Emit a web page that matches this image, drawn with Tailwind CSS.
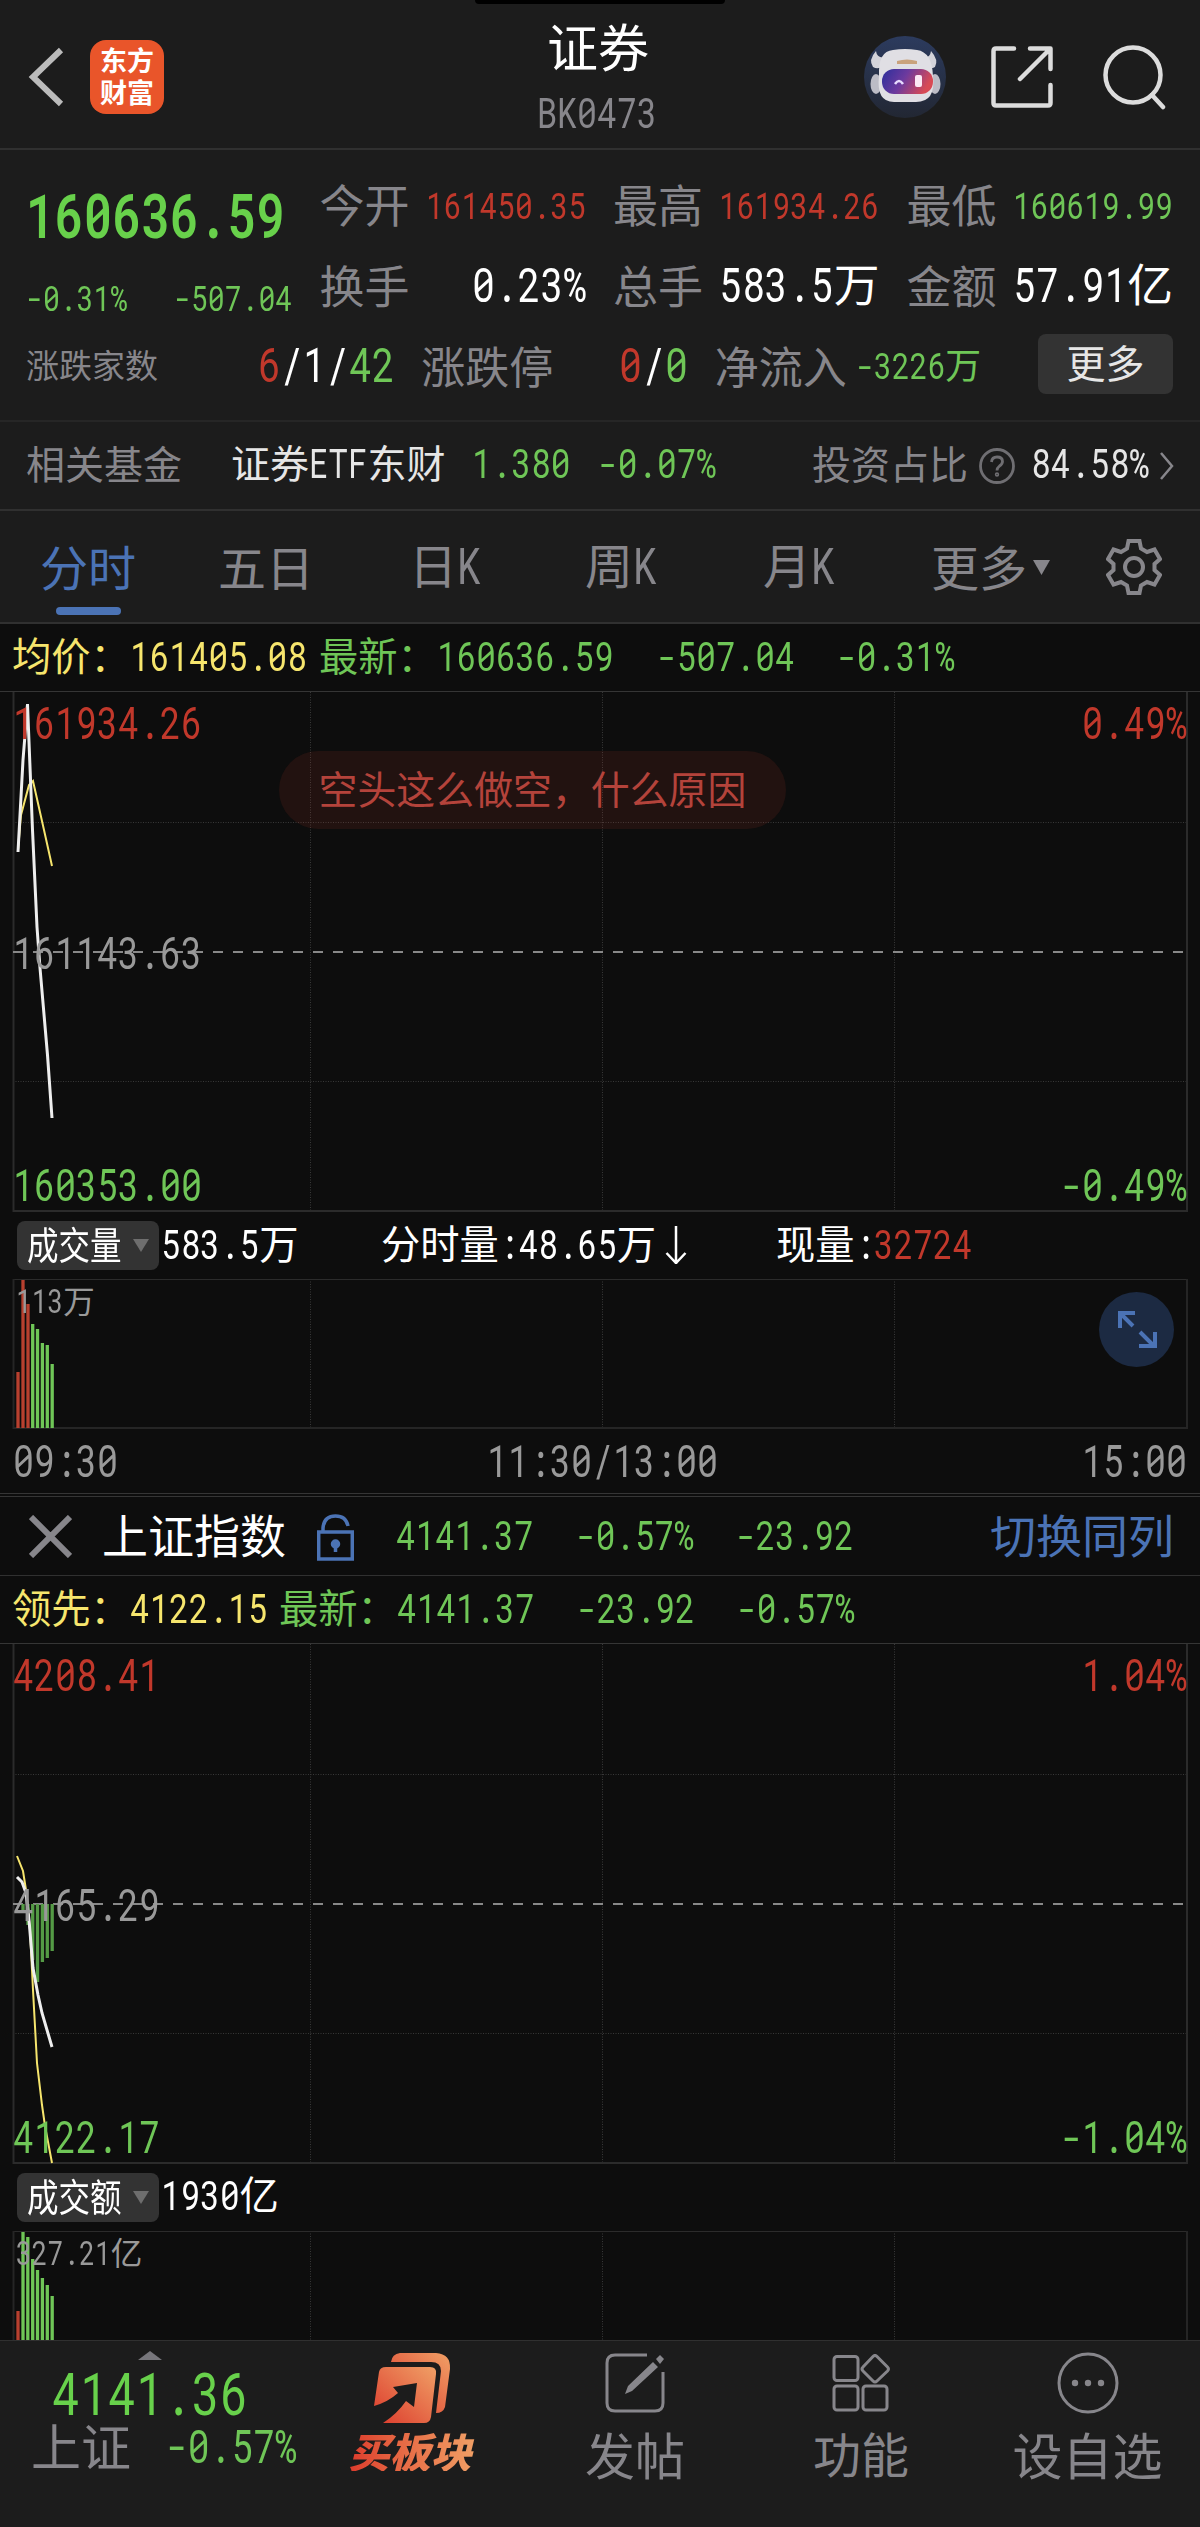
<!DOCTYPE html>
<html lang="zh-CN">

<head>
    <meta charset="UTF-8">
    <meta name="viewport" content="width=device-width, initial-scale=1.0">
    <title>证券 BK0473</title>
    <script src="https://cdn.jsdelivr.net/npm/@tailwindcss/browser@4"></script>
</head>

<body class="w-[1200px] h-[2527px] overflow-hidden bg-[#0d0d0d] text-white leading-none whitespace-nowrap font-['Noto_Sans_CJK_SC',sans-serif]">

    <!-- header -->
    <header class="relative h-[150px] bg-[#1c1c1c] border-b-2 border-[#303030] flex items-center justify-between pl-[28px] pr-[31px]">
        <div class="absolute top-0 left-[475px] w-[250px] h-[4px] bg-black rounded-b-[4px]"></div>
        <div class="flex items-center gap-[26px] mt-[5px]">
            <svg width="36" height="60" viewBox="0 0 36 60" fill="none" stroke="#bbbbbb" stroke-width="6"><path d="M33 3 L5 30 L33 57" /></svg>
            <div class="w-[74px] h-[74px] rounded-[16px] bg-[#e9552a] flex flex-col items-center justify-center gap-[5px] pb-[3px] text-[27px] font-bold">
                <span>东方</span>
                <span>财富</span>
            </div>
        </div>
        <div class="absolute left-[398px] w-[400px] top-[20px] flex flex-col items-center gap-[20px]">
            <h1 class="text-[51px]">证券</h1>
            <div class="text-[40px] text-[#87868b] -ml-[2px]"><i data-n>BK0473</i></div>
        </div>
        <div class="flex items-center gap-[45px] mt-[5px] mr-px">
            <svg width="82" height="82" viewBox="0 0 82 82">
                <defs>
                    <linearGradient id="sky" x1="0" y1="0" x2="0" y2="1"><stop offset="0" stop-color="#2c3b5e" /><stop offset="1" stop-color="#222733" /></linearGradient>
                    <linearGradient id="visor" x1="0" y1="0" x2="1" y2="0.3"><stop offset="0" stop-color="#2b2f9c" /><stop offset="0.5" stop-color="#6d3a9e" /><stop offset="1" stop-color="#d84a55" /></linearGradient>
                </defs>
                <circle cx="41" cy="41" r="41" fill="url(#sky)" />
                <path d="M12 15 Q4 24 9 31 Q14 34 19 30 L22 21 Q13 23 12 15 Z M67 15 Q75 24 71 31 Q66 34 61 30 L58 21 Q66 23 67 15 Z" fill="#d3d3da" />
                <ellipse cx="12" cy="48" rx="5.500" ry="10" fill="#bcbcc6" />
                <ellipse cx="71" cy="48" rx="5.500" ry="10" fill="#bcbcc6" />
                <path d="M15 40 Q14 15 29 14 Q41 12 53 14 Q68 16 69 40 Q72 66 52 66 H30 Q12 66 15 40 Z" fill="#e0dfe4" />
                <path d="M33 25 Q43 22 53 25 V28 H33 Z" fill="#c9a27c" />
                <rect x="18" y="33" width="51" height="25" rx="12" fill="url(#visor)" />
                <path d="M31 48 Q35 42 39 48" fill="none" stroke="#e8dcff" stroke-width="2.500" />
                <rect x="51" y="39" width="7" height="12" rx="2" fill="#fbe9f4" />
            </svg>
            <svg width="62" height="62" viewBox="0 0 62 62" fill="none" stroke="#dcdcdc" stroke-width="4.500" stroke-linecap="round" stroke-linejoin="round">
                <path d="M23 2.500 H5 Q2.500 2.500 2.500 5 V57 Q2.500 59.500 5 59.500 H57 Q59.500 59.500 59.500 57 V39" />
                <path d="M39 2.500 H59.500 V23 M59 3 L29 33" />
            </svg>
            <svg class="ml-[4px]" width="66" height="66" viewBox="0 0 66 66" fill="none" stroke="#dcdcdc" stroke-width="4.500" stroke-linecap="round">
                <circle cx="31" cy="31" r="27.500" />
                <path d="M50 51 L61 63" />
            </svg>
        </div>
    </header>

    <!-- quote summary -->
    <section class="h-[270px] bg-[#1c1c1c] pt-[11px] pl-[26px] pr-[27px] text-[45px] text-[#87868b]">
        <div class="grid grid-cols-4 gap-x-[27px] h-[82px] items-center">
            <div class="text-[57.600px] text-[#68d14b] pt-[24px] font-semibold"><i data-n>160636.59</i></div>
            <div class="flex justify-between items-center"><span>今开</span><span class="text-[35.600px] text-[#c1382b] pt-[3px]"><i data-n>161450.35</i></span></div>
            <div class="flex justify-between items-center"><span>最高</span><span class="text-[35.600px] text-[#c1382b] pt-[3px]"><i data-n>161934.26</i></span></div>
            <div class="flex justify-between items-center"><span>最低</span><span class="text-[35.600px] text-[#6fc657] pt-[3px]"><i data-n>160619.99</i></span></div>
        </div>
        <div class="grid grid-cols-4 gap-x-[27px] h-[82px] items-center">
            <div class="flex justify-between text-[33.800px] text-[#6fc657] pt-[27px]"><i data-n>-0.31%</i><i data-n>-507.04</i></div>
            <div class="flex justify-between items-center"><span>换手</span><span class="text-white text-[45.800px]"><i data-n>0.23%</i></span></div>
            <div class="flex justify-between items-center"><span>总手</span><span class="text-white text-[45.800px]"><i data-n>583.5</i>万</span></div>
            <div class="flex justify-between items-center"><span>金额</span><span class="text-white text-[45.800px]"><i data-n>57.91</i>亿</span></div>
        </div>
        <div class="flex h-[78px] items-center text-[44px]">
            <span class="text-[33px] w-[232px]">涨跌家数</span>
            <span class="w-[164px] text-[45.800px] text-white pt-px"><i data-n class="text-[#c1382b]">6</i><i data-n>/1/</i><i data-n class="text-[#6fc657]">42</i></span>
            <span class="w-[198px] pt-px">涨跌停</span>
            <span class="w-[96px] text-[45.800px] text-white pt-px"><i data-n class="text-[#c1382b]">0</i><i data-n>/</i><i data-n class="text-[#6fc657]">0</i></span>
            <span class="w-[141px] pt-px">净流入</span>
            <span class="w-[183px] text-[35.900px] text-[#6fc657] pt-[2px]"><i data-n>-3226</i>万</span>
            <span class="w-[135px] h-[60px] rounded-[8px] bg-[#333333] text-[#e6e6e6] text-[39px] flex items-center justify-center pb-[5px]">更多</span>
        </div>
    </section>

    <!-- related fund -->
    <section class="h-[91px] bg-[#1c1c1c] border-t-2 border-b-2 border-t-[#262626] border-b-[#303030] flex items-center pl-[26px] pb-[7px] text-[39px] text-[#87868b]">
        <span class="w-[205px]">相关基金</span>
        <span class="w-[241px] text-[#e6e6e6]">证券<i data-n>ETF</i>东财</span>
        <span class="w-[126px] text-[39.400px] text-[#6fc657]"><i data-n>1.380</i></span>
        <span class="w-[214px] text-[39.400px] text-[#6fc657]"><i data-n>-0.07%</i></span>
        <span class="w-[167px]">投资占比</span>
        <svg class="mt-[8px]" width="36" height="36" viewBox="0 0 36 36" fill="none" stroke="#6f6e72" stroke-width="2.800">
            <circle cx="18" cy="18" r="16.500" />
            <path d="M12.500 14 Q13 9 18 9 Q23.500 9 23.500 13.500 Q23.500 16 20.500 18 Q18 20 18 22.500" />
            <circle cx="18" cy="26.500" r="0.800" />
        </svg>
        <span class="ml-[16px] text-[#e6e6e6] text-[39.400px]"><i data-n>84.58%</i></span>
        <svg class="ml-[11px] mt-[8px]" width="14" height="30" viewBox="0 0 14 30" fill="none" stroke="#87868b" stroke-width="2.500"><path d="M1 2 L12 15 L1 28" /></svg>
    </section>

    <!-- period tabs -->
    <nav class="relative h-[113px] bg-[#1c1c1c] border-b-2 border-[#303030] flex items-center pl-[40px] pb-[4px] text-[48px] text-[#87868b]">
        <span class="w-[178px] text-[#4b73b5]">分时</span>
        <span class="w-[191px]">五日</span>
        <span class="w-[176px]">日<i data-n>K</i></span>
        <span class="w-[178px]">周<i data-n>K</i></span>
        <span class="w-[168px]">月<i data-n>K</i></span>
        <span>更多</span>
        <svg class="ml-[6px] mt-[6px]" width="17" height="15"><path d="M0 0 H17 L8.500 15 Z" fill="#87868b" /></svg>
        <svg class="ml-[56px] mt-[4px]" width="56" height="56" viewBox="0 0 56 56" fill="none" stroke="#87868b" stroke-width="4">
            <path d="M22.500 2 H33.500 L35 9.500 L41 13 L48.500 10.500 L54 20 L48.500 25 V31 L54 36 L48.500 45.500 L41 43 L35 46.500 L33.500 54 H22.500 L21 46.500 L15 43 L7.500 45.500 L2 36 L7.500 31 V25 L2 20 L7.500 10.500 L15 13 L21 9.500 Z" />
            <circle cx="28" cy="28" r="9" />
        </svg>
        <div class="absolute left-[56px] top-[96px] w-[65px] h-[8px] rounded-full bg-[#4b73b5]"></div>
    </nav>

    <!-- first chart -->
    <div class="h-[68px] border-b border-[#353535] flex items-center pl-[12px] pb-[5px] text-[39.300px] text-[#6fc657]">
        <span class="w-[307px] text-[#f6e56d]">均价：<i data-n>161405.08</i></span>
        <span class="w-[338px]">最新：<i data-n>160636.59</i></span>
        <span class="w-[180px]"><i data-n>-507.04</i></span>
        <span><i data-n>-0.31%</i></span>
    </div>
    <div class="relative h-[520px]">
        <svg class="block" width="1200" height="520" viewBox="0 692 1200 520" fill="none">
            <path d="M310.500 692 V1210 M602.500 692 V1210 M894.500 692 V1210 M13 822.500 H1187 M13 1081.500 H1187" stroke="#383838" stroke-dasharray="1 1.500" />
            <path d="M13.500 692 V1211 H1187 V692" stroke="#2b2b2b" stroke-width="2" />
            <path d="M13 952 H1187" stroke="#888888" stroke-width="2" stroke-dasharray="10 10" />
            <path d="M18 850 L21 815 L29 785 L33 781 L44 830 L52 866" stroke="#f6e56d" stroke-width="2" />
            <path d="M18 852 L23 760 L27.500 704 L32.500 830 L37 927 L40 968 L47.500 1055 L52 1118" stroke="#eeeeee" stroke-width="3" />
        </svg>
        <div class="absolute inset-0 pl-[13px] pr-[13px] text-[42px]">
            <div class="flex justify-between text-[#c1382b] h-[231px] pt-[8px]"><i data-n>161934.26</i><i data-n>0.49%</i></div>
            <div class="text-[#999999] h-[231px] pt-[7px]"><i data-n>161143.63</i></div>
            <div class="flex justify-between text-[#6fc657] pt-[8px]"><i data-n>160353.00</i><i data-n>-0.49%</i></div>
        </div>
        <div class="absolute left-[279px] top-[59px] w-[507px] h-[78px] rounded-full bg-[#c1382b]/12 text-[#b4433b] text-[38.900px] flex items-center justify-center pb-[6px]">空头这么做空，什么原因</div>
    </div>
    <div class="h-[67px] flex items-center pl-[17px] text-[39.300px]">
        <span class="w-[144px]">
            <span class="w-[142px] h-[49px] rounded-[8px] bg-[#333333] flex items-center pl-[10px] pb-[6px] text-[38px]">
                <span class="w-[106px] origin-left scale-x-[.83]">成交量</span>
                <svg class="mt-[6px]" width="16" height="14"><path d="M0 0 H16 L8 13 Z" fill="#6e6e6e" /></svg>
            </span>
        </span>
        <span class="w-[220px] pb-[4px]"><i data-n>583.5</i>万</span>
        <span class="w-[395px] pb-[4px]">分时量<i data-n>:48.65</i>万<svg class="inline align-[-5px]" width="39" height="40" viewBox="0 0 39 40" fill="none" stroke="#ffffff" stroke-width="2.500"><path d="M20 2 V40 M10.500 29 L20 39 L29.500 29" /></svg></span>
        <span class="pb-[4px]">现量<i data-n>:</i><i data-n class="text-[#c1382b]">32724</i></span>
    </div>
    <div class="relative h-[150px]">
        <svg class="block" width="1200" height="150" viewBox="0 1279 1200 150" fill="none">
            <path d="M310.500 1279 V1428 M602.500 1279 V1428 M894.500 1279 V1428" stroke="#383838" stroke-dasharray="1 1.500" />
            <path d="M13 1279.500 H1187" stroke="#2b2b2b" />
            <path d="M13.500 1279 V1428 H1187 V1279" stroke="#252525" stroke-width="2" />
            <path d="M18 1428 V1372 M23 1428 V1280 M28 1428 V1304" stroke="#b8402f" stroke-width="3.300" />
            <path d="M32.700 1428 V1324 M37.500 1428 V1329 M42.400 1428 V1343 M47.300 1428 V1345 M52.200 1428 V1364" stroke="#6fc657" stroke-width="3.300" />
        </svg>
        <div class="absolute left-[16px] top-[5px] text-[31.500px] text-[#999999]"><i data-n>113</i>万</div>
        <svg class="absolute left-[1099px] top-[13px]" width="75" height="75" viewBox="0 0 75 75" fill="none" stroke="#4b73b5" stroke-width="4">
            <circle cx="37.500" cy="37.500" r="37.500" fill="#1c2a42" stroke="none" />
            <path d="M21 36 V21 H36 M22 22 L34 34 M56 40 V54 H40 M54 53 L41 40" />
        </svg>
    </div>
    <div class="h-[68px] grid grid-cols-3 items-center pl-[13px] pr-[13px] pb-[2px] text-[42px] text-[#999999] border-b-4 border-double border-[#353535]">
        <span><i data-n>09:30</i></span>
        <span class="text-center pl-[4px]"><i data-n>11:30/13:00</i></span>
        <span class="text-right"><i data-n>15:00</i></span>
    </div>

    <!-- second chart -->
    <div class="h-[79px] border-b border-[#303030] flex items-center pl-[29px] text-[39.300px] text-[#6fc657]">
        <svg class="mr-[30px]" width="43" height="43" viewBox="0 0 43 43" stroke="#87868b" stroke-width="6"><path d="M2 2 L41 41 M41 2 L2 41" /></svg>
        <span class="w-[215px] text-white text-[46px] pb-[7px]">上证指数</span>
        <svg class="mr-[42px] mt-[2px]" width="37" height="47" viewBox="0 0 37 47" fill="none" stroke="#4b73b5" stroke-width="3.500">
            <rect x="1.700" y="18" width="33.600" height="27" />
            <path d="M6 18 V14 Q7 2 18.500 2 Q29 2 31 12" />
            <circle cx="18.500" cy="30" r="3" fill="#4b73b5" />
            <path d="M18.500 31 V38" />
        </svg>
        <span class="w-[180px] pb-[4px]"><i data-n>4141.37</i></span>
        <span class="w-[160px] pb-[4px]"><i data-n>-0.57%</i></span>
        <span class="w-[254px] pb-[4px]"><i data-n>-23.92</i></span>
        <span class="text-[46px] text-[#4b73b5] pb-[7px]">切换同列</span>
    </div>
    <div class="h-[68px] border-b border-[#353535] flex items-center pl-[12px] pb-[5px] text-[39.300px] text-[#6fc657]">
        <span class="w-[267px] text-[#f6e56d]">领先：<i data-n>4122.15</i></span>
        <span class="w-[298px]">最新：<i data-n>4141.37</i></span>
        <span class="w-[160px]"><i data-n>-23.92</i></span>
        <span><i data-n>-0.57%</i></span>
    </div>
    <div class="relative h-[520px]">
        <svg class="block" width="1200" height="520" viewBox="0 1644 1200 520" fill="none">
            <path d="M310.500 1644 V2162 M602.500 1644 V2162 M894.500 1644 V2162 M13 1774.500 H1187 M13 2033.500 H1187" stroke="#383838" stroke-dasharray="1 1.500" />
            <path d="M13.500 1644 V2163 H1187 V1644" stroke="#2b2b2b" stroke-width="2" />
            <path d="M13 1904 H1187" stroke="#888888" stroke-width="2" stroke-dasharray="10 10" />
            <path d="M23 1904 V1910 M28 1904 V1925 M32.700 1904 V1960 M37.500 1904 V1982 M42.400 1904 V1962 M47.300 1904 V1958 M52.200 1904 V1951" stroke="#549a45" stroke-width="3.300" />
            <path d="M17 1856 L23 1871 L26 1890 L30 1930 L33 1990 L37 2063 L42 2105 L45 2126 L52 2163" stroke="#f6e56d" stroke-width="2" />
            <path d="M17 1877 L22 1882 L26 1893 L29 1920 L33 1968 L38 1995 L42 2013 L52 2047" stroke="#eeeeee" stroke-width="3" />
        </svg>
        <div class="absolute inset-0 pl-[13px] pr-[13px] text-[42px]">
            <div class="flex justify-between text-[#c1382b] h-[231px] pt-[8px]"><i data-n>4208.41</i><i data-n>1.04%</i></div>
            <div class="text-[#999999] h-[231px] pt-[7px]"><i data-n>4165.29</i></div>
            <div class="flex justify-between text-[#6fc657] pt-[8px]"><i data-n>4122.17</i><i data-n>-1.04%</i></div>
        </div>
    </div>
    <div class="h-[67px] flex items-center pl-[17px] text-[39.300px]">
        <span class="w-[144px]">
            <span class="w-[142px] h-[49px] rounded-[8px] bg-[#333333] flex items-center pl-[10px] pb-[6px] text-[38px]">
                <span class="w-[106px] origin-left scale-x-[.83]">成交额</span>
                <svg class="mt-[6px]" width="16" height="14"><path d="M0 0 H16 L8 13 Z" fill="#6e6e6e" /></svg>
            </span>
        </span>
        <span class="pb-[6px]"><i data-n>1930</i>亿</span>
    </div>
    <div class="relative h-[109px]">
        <svg class="block" width="1200" height="109" viewBox="0 2231 1200 109" fill="none">
            <path d="M310.500 2231 V2340 M602.500 2231 V2340 M894.500 2231 V2340" stroke="#383838" stroke-dasharray="1 1.500" />
            <path d="M13 2231.500 H1187" stroke="#2b2b2b" />
            <path d="M13.500 2231 V2340 M1187 2231 V2340" stroke="#252525" stroke-width="2" />
            <path d="M18 2340 V2311" stroke="#b8402f" stroke-width="3.300" />
            <path d="M23 2340 V2232 M27.800 2340 V2237 M32.700 2340 V2259 M37.500 2340 V2270 M42.400 2340 V2278 M47.300 2340 V2285 M52.200 2340 V2296" stroke="#6fc657" stroke-width="3.300" />
        </svg>
        <div class="absolute left-[16px] top-[5px] text-[31.600px] text-[#999999]"><i data-n>327.21</i>亿</div>
    </div>

    <!-- bottom bar -->
    <footer class="h-[187px] bg-[#1c1c1c] border-t border-[#303030] flex text-[#87868b] text-[50px]">
        <div class="w-[342px] pt-[10px] pl-[31px]">
            <svg class="ml-[107px]" width="24" height="9"><path d="M0 9 L12 0 L24 9 Z" fill="#77767b" /></svg>
            <div class="pl-[21px] mt-[3px] text-[56px] text-[#68d14b]"><i data-n>4141.36</i></div>
            <div class="flex items-center -mt-[3px]">
                <span class="w-[135px]">上证</span>
                <span class="text-[43.600px] text-[#6fc657] pt-[4px]"><i data-n>-0.57%</i></span>
            </div>
        </div>
        <div class="w-[141px] pt-[12px] flex flex-col items-center">
            <svg width="78" height="71" viewBox="0 0 78 71">
                <defs><linearGradient id="hot" x1="0" y1="1" x2="1" y2="0"><stop offset="0" stop-color="#dc3a2c" /><stop offset="1" stop-color="#f0a066" /></linearGradient></defs>
                <path d="M17 9 Q18 1 26 0 H62 Q77 1 76 16 L71 54 Q69 60 62 60 L67 18 Q67 9 57 9 Z" fill="url(#hot)" />
                <path d="M5 19 Q6 14 12 14 H56 Q63 14 62 21 L57 64 Q56 70 50 70 H9 Q23 61 32 48 L40 54 L43 30 L19 34 L24 40 Q14 49 0 53 Z" fill="url(#hot)" />
            </svg>
            <span class="mt-[6px] pr-[5px] text-[41px] font-black italic text-transparent bg-clip-text bg-linear-to-r from-[#dc3a2c] to-[#f0a066]">买板块</span>
        </div>
        <div class="w-[306px] pt-[12px] pr-[2px] flex flex-col items-center">
            <svg width="60" height="60" viewBox="0 0 60 60" fill="none" stroke="#87868b" stroke-width="3">
                <path d="M42 2 H10 Q2 2 2 10 V50 Q2 58 10 58 H50 Q58 58 58 50 V19" />
                <path d="M48 9 L53 14 L27 38 L20 41 L23 33 Z M51 6 L55 2 L59 6 L55 11 Z" fill="#87868b" stroke="none" />
            </svg>
            <span class="mt-[15px]">发帖</span>
        </div>
        <div class="w-[144px] pt-[13px] flex flex-col items-center text-[48px]">
            <svg width="58" height="58" viewBox="0 0 58 58" fill="none" stroke="#87868b" stroke-width="3">
                <rect x="2" y="2.500" width="24" height="24" rx="3" />
                <rect x="2" y="32" width="24" height="24" rx="3" />
                <rect x="31" y="32" width="24" height="24" rx="3" />
                <path d="M41 2.500 Q43 0.500 45 2.500 L55.500 13 Q57.500 15 55.500 17 L45 27 Q43 29 41 27 L31 17 Q29 15 31 13 Z" />
            </svg>
            <span class="mt-[16px]">功能</span>
        </div>
        <div class="w-[267px] pt-[11px] pl-[42px] flex flex-col items-center">
            <svg width="62" height="62" viewBox="0 0 62 62" fill="#87868b">
                <circle cx="31" cy="31" r="29" fill="none" stroke="#87868b" stroke-width="3" />
                <circle cx="18" cy="31" r="3.200" /><circle cx="31" cy="31" r="3.200" /><circle cx="44" cy="31" r="3.200" />
            </svg>
            <span class="mt-[14px]">设自选</span>
        </div>
    </footer>

    <script>
        // narrow fixed pitch figures: every character takes half an em of the surrounding text
        document.querySelectorAll("[data-n]").forEach((el) => {
            const weight = el.closest(".font-semibold") ? "font-semibold" : "font-[450]";
            el.className += " inline-block not-italic text-[1.05em] leading-none whitespace-pre slashed-zero origin-left scale-x-[.7937] font-['Roboto_Mono','Noto_Sans_Mono',monospace] " + weight;
            el.style.width = el.textContent.length * 0.5 / 1.05 + "em";
        });
    </script>

</body>

</html>
